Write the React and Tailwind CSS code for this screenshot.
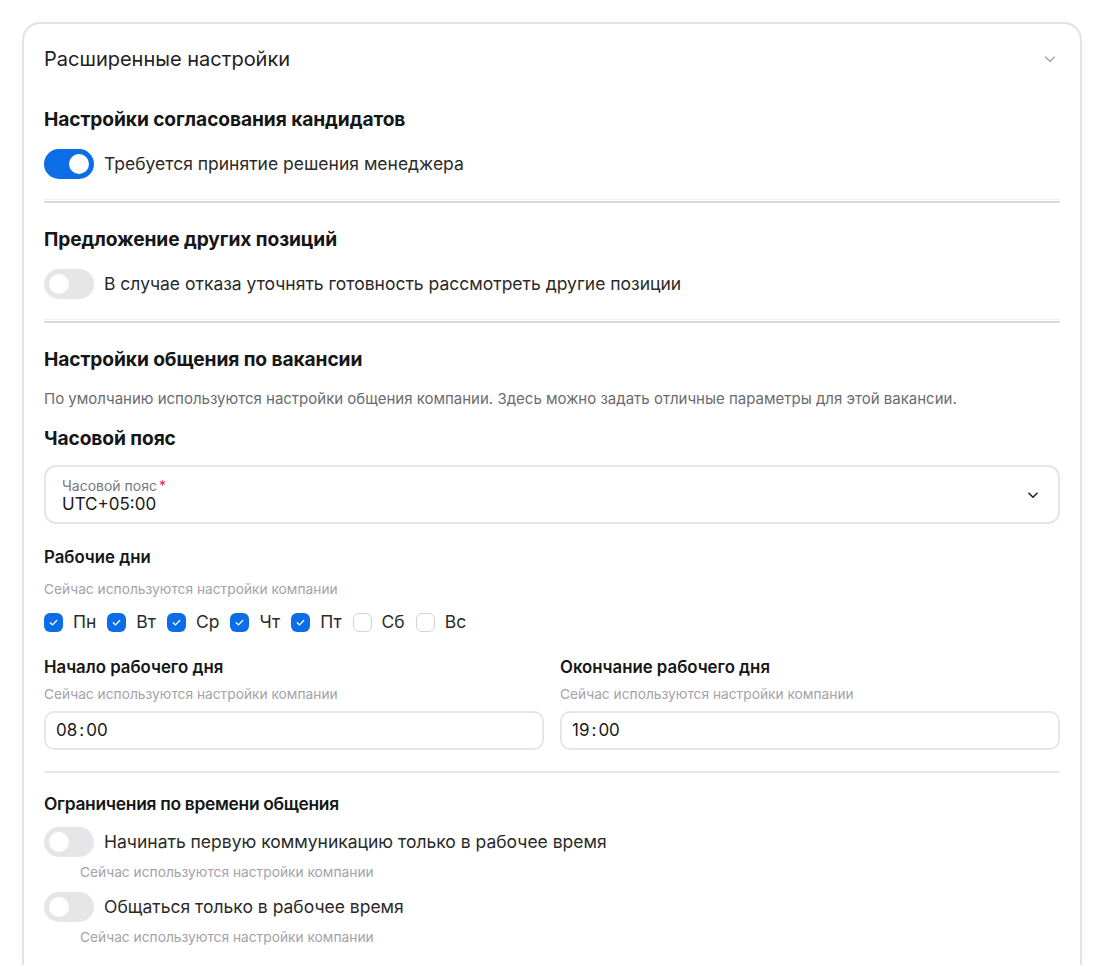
import React from "react";

function Toggle({ on }) {
  return (
    <div
      className={
        "relative h-[30px] w-[50px] shrink-0 rounded-full " +
        (on ? "bg-[#0b6ee6]" : "bg-[#e6e6e9]")
      }
    >
      <div
        className={
          "absolute top-[5px] h-[20px] w-[20px] rounded-full bg-white " +
          (on ? "left-[25px]" : "left-[5px]")
        }
      />
    </div>
  );
}

function Check({ on }) {
  if (on)
    return (
      <div className="flex h-[19px] w-[19px] items-center justify-center rounded-[6px] bg-[#0b6ee6]">
        <svg width="11" height="11" viewBox="0 0 12 12" fill="none">
          <path d="M2.5 6.2l2.4 2.4 4.6-4.8" stroke="white" strokeWidth="1.4" strokeLinecap="round" strokeLinejoin="round" />
        </svg>
      </div>
    );
  return <div className="h-[19px] w-[19px] rounded-[6px] border-[1.5px] border-[#d3d3d7] bg-white" />;
}

const Divider = () => (
  <div className="h-[4px] border-t border-[#f0f0f0] bg-[#d9d9d9] bg-clip-content pt-px" />
);

const Sub = ({ children, className = "" }) => (
  <div className={"text-[13.75px] leading-[16px] text-[#a3a3a8] " + className}>{children}</div>
);

const H = ({ children, className = "" }) => (
  <div className={"text-[19.2px] font-bold leading-[24px] tracking-[-0.1px] text-[#161616] " + className}>{children}</div>
);

const H2 = ({ children, className = "" }) => (
  <div className={"text-[16.8px] font-semibold leading-[22px] text-[#161616] " + className}>{children}</div>
);

const L = ({ children }) => (
  <span className="text-[17.5px] leading-[22px] text-[#2a2a2a]">{children}</span>
);

export default function App() {
  const days = [
    ["Пн", true],
    ["Вт", true],
    ["Ср", true],
    ["Чт", true],
    ["Пт", true],
    ["Сб", false],
    ["Вс", false],
  ];
  return (
    <div
      className="min-h-[967px] bg-white pl-[22px] pr-[17px] pt-[22px] text-[#1a1a1a]"
      style={{ fontFamily: "Inter, 'Noto Sans', sans-serif" }}
    >
      <div className="rounded-t-[18px] border-x-2 border-t-2 border-[#e3e3e3] px-[20px] pb-[20px]">
        <div className="flex h-[70px] items-center justify-between">
          <div className="text-[20px] leading-[24px] text-[#222]">Расширенные настройки</div>
          <svg width="14" height="14" viewBox="0 0 14 14" className="mr-[3px]" fill="none">
            <path d="M2.5 5l4.5 4.5L11.5 5" stroke="#9a9a9a" strokeWidth="1.1" strokeLinecap="round" />
          </svg>
        </div>

        <H className="mt-[13px]">Настройки согласования кандидатов</H>
        <div className="mt-[18px] flex items-center gap-[10px]">
          <Toggle on />
          <L>Требуется принятие решения менеджера</L>
        </div>
        <div className="mt-[20px]"><Divider /></div>

        <H className="mt-[24px]">Предложение других позиций</H>
        <div className="mt-[18px] flex items-center gap-[10px]">
          <Toggle />
          <L>В случае отказа уточнять готовность рассмотреть другие позиции</L>
        </div>
        <div className="mt-[20px]"><Divider /></div>

        <H className="mt-[24px]">Настройки общения по вакансии</H>
        <div className="mt-[20px] text-[15px] leading-[16px] text-[#6b6b70]">
          По умолчанию используются настройки общения компании. Здесь можно задать отличные параметры для этой вакансии.
        </div>
        <H className="mt-[19px]">Часовой пояс</H>

        <div className="mt-[15px] flex h-[59px] items-center justify-between rounded-[12px] border-2 border-[#e6e6e8] pl-[16px] pr-[18px]">
          <div className="pt-[2px]">
            <div className="text-[14px] leading-[16px] text-[#77777c]">
              Часовой пояс<span className="ml-[2px] text-[#e0245e]">*</span>
            </div>
            <div className="text-[17px] leading-[20px] text-[#1a1a1a]">UTC+05:00</div>
          </div>
          <svg width="14" height="14" viewBox="0 0 14 14" fill="none">
            <path d="M3 5.2l4 4 4-4" stroke="#222" strokeWidth="1.6" strokeLinecap="round" strokeLinejoin="round" />
          </svg>
        </div>

        <H2 className="mt-[22px]">Рабочие дни</H2>
        <Sub className="mt-[13px]">Сейчас используются настройки компании</Sub>
        <div className="mt-[14px] flex items-center gap-[11px]">
          {days.map(([d, on]) => (
            <div key={d} className="flex items-center gap-[10px]">
              <Check on={on} />
              <L>{d}</L>
            </div>
          ))}
        </div>

        <div className="mt-[23px] grid grid-cols-2 gap-[16px]">
          {[["Начало рабочего дня", "08", "00"], ["Окончание рабочего дня", "19", "00"]].map(([t, h, m]) => (
            <div key={t}>
              <H2>{t}</H2>
              <Sub className="mt-[8px]">Сейчас используются настройки компании</Sub>
              <div className="mt-[9px] flex h-[39px] items-center rounded-[10px] border-2 border-[#e6e6e8] px-[10px] text-[17px] text-[#1a1a1a]">
                {h}<span className="mx-[2px]">:</span>{m}
              </div>
            </div>
          ))}
        </div>

        <div className="mt-[21px] h-[2px] bg-[#e6e6e6]" />

        <div className="mt-[20px] text-[17.4px] font-semibold leading-[22px] tracking-[-0.3px] text-[#161616]">Ограничения по времени общения</div>
        <div className="mt-[12px] flex items-center gap-[10px]">
          <Toggle />
          <L>Начинать первую коммуникацию только в рабочее время</L>
        </div>
        <Sub className="ml-[36px] mt-[7px]">Сейчас используются настройки компании</Sub>
        <div className="mt-[12px] flex items-center gap-[10px]">
          <Toggle />
          <L>Общаться только в рабочее время</L>
        </div>
        <Sub className="ml-[36px] mt-[7px]">Сейчас используются настройки компании</Sub>
      </div>
    </div>
  );
}
